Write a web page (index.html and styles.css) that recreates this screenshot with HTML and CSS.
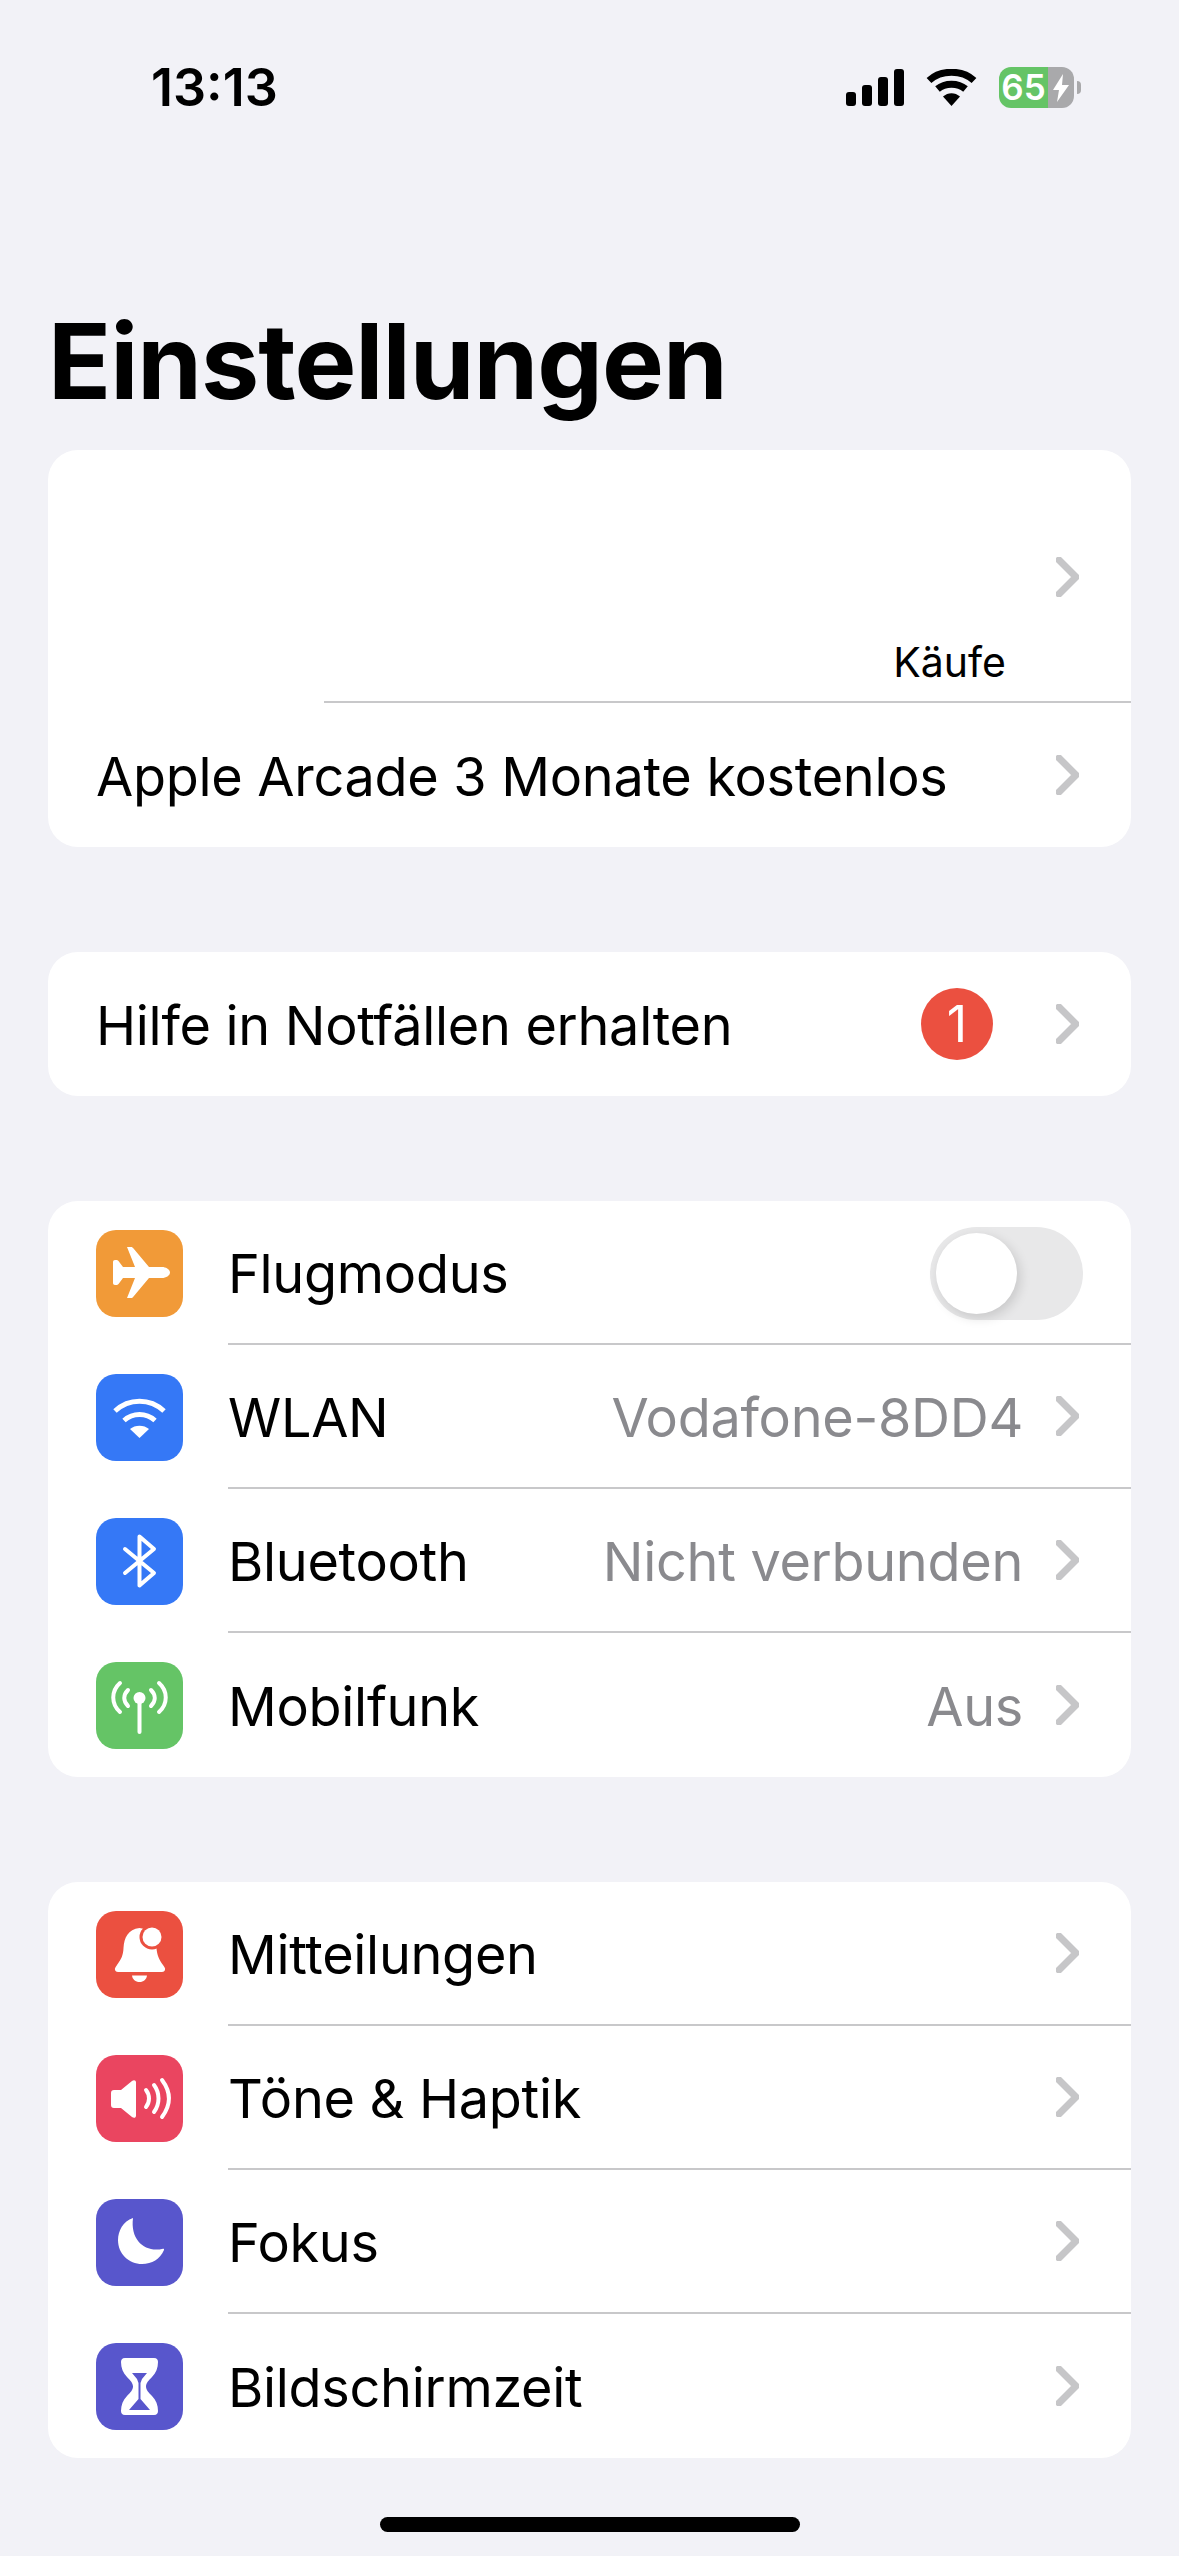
FILE: index.html
```html
<!DOCTYPE html>
<html lang="de">
<head>
    <meta charset="UTF-8">
    <meta name="viewport" content="width=device-width, initial-scale=1.0">
    <title>Einstellungen</title>
    <link rel="stylesheet" href="styles.css">
</head>
<body>

    <!-- Statusleiste -->
    <div class="status-bar">
        <span class="time">13:13</span>
        <div class="status-icons">
            <svg class="signal" width="58" height="37" viewBox="0 0 58 37">
                <rect x="0" y="23" width="10" height="14" rx="3"/>
                <rect x="16" y="16" width="10" height="21" rx="3"/>
                <rect x="32" y="8" width="10" height="29" rx="3"/>
                <rect x="48" y="0" width="10" height="37" rx="3"/>
            </svg>
            <svg class="wifi" width="51" height="37" viewBox="0 0 51 37">
                <path d="M3 11.500C15 .5 36 .5 48 11.500" fill="none" stroke="#000" stroke-width="7"/>
                <path d="M11.500 20C19 13.500 32 13.500 39.500 20" fill="none" stroke="#000" stroke-width="7"/>
                <path d="M17 27.500C22 23 29 23 34 27.500L25.500 37Z"/>
            </svg>
            <div class="battery">
                <div class="battery-level">65</div>
                <div class="battery-rest">
                    <svg width="18" height="28" viewBox="0 0 18 28">
                        <path d="M11 0 1 16h6L5 28 17 11h-7z" fill="#fff"/>
                    </svg>
                </div>
                <span class="battery-nub"></span>
            </div>
        </div>
    </div>

    <h1 class="title">Einstellungen</h1>

    <!-- Apple-ID -->
    <section class="card">
        <div class="account">
            <svg class="chevron account-chevron" width="23" height="40" viewBox="0 0 23 40"><path d="M3 3 20 20 3 37"/></svg>
            <span class="account-sub">Käufe</span>
        </div>
        <div class="row row-plain">
            <div class="row-body">
                <span class="label">Apple Arcade 3 Monate kostenlos</span>
                <svg class="chevron" width="23" height="40" viewBox="0 0 23 40"><path d="M3 3 20 20 3 37"/></svg>
            </div>
        </div>
    </section>

    <section class="card">
        <div class="row row-plain">
            <div class="row-body">
                <span class="label">Hilfe in Notfällen erhalten</span>
                <span class="badge">1</span>
                <svg class="chevron" width="23" height="40" viewBox="0 0 23 40"><path d="M3 3 20 20 3 37"/></svg>
            </div>
        </div>
    </section>

    <!-- Verbindungen -->
    <section class="card">
        <div class="row">
            <svg class="icon orange" viewBox="0 0 87 87">
                <path fill="#fff" d="M74 42.500c0-3-4-5.500-8-5.500H53L37.500 18.500c-.8-1-1.500-1.500-2.500-1.500h-4l8 20H27l-4.500-6c-.6-.7-1.200-1-2-1H19c-1.200 0-2 .8-2 2v21c0 1.200.8 2 2 2h1.500c.8 0 1.400-.3 2-1l4.500-6h12L31 68h4c1 0 1.700-.5 2.500-1.500L53 48h13c4 0 8-2.500 8-5.500z"/>
            </svg>
            <div class="row-body">
                <span class="label">Flugmodus</span>
                <div class="toggle"><span class="toggle-thumb"></span></div>
            </div>
        </div>
        <div class="row">
            <svg class="icon blue" viewBox="0 0 87 87">
                <path d="M19 37C33 24 54 24 68 37" fill="none" stroke="#fff" stroke-width="5"/>
                <path d="M28 46.500C37 38.500 50 38.500 59 46.500" fill="none" stroke="#fff" stroke-width="5"/>
                <path fill="#fff" d="M34 55C39 50.500 48 50.500 53 55L43.500 64Z"/>
            </svg>
            <div class="row-body">
                <span class="label">WLAN</span>
                <span class="value">Vodafone-8DD4</span>
                <svg class="chevron" width="23" height="40" viewBox="0 0 23 40"><path d="M3 3 20 20 3 37"/></svg>
            </div>
        </div>
        <div class="row">
            <svg class="icon blue" viewBox="0 0 87 87">
                <path d="M29 31 58 55 43.500 67.500V18.500L58 31 29 55" fill="none" stroke="#fff" stroke-width="4" stroke-linecap="round" stroke-linejoin="round"/>
            </svg>
            <div class="row-body">
                <span class="label">Bluetooth</span>
                <span class="value">Nicht verbunden</span>
                <svg class="chevron" width="23" height="40" viewBox="0 0 23 40"><path d="M3 3 20 20 3 37"/></svg>
            </div>
        </div>
        <div class="row">
            <svg class="icon green" viewBox="0 0 87 87">
                <circle cx="43.500" cy="36" r="6" fill="#fff"/>
                <g fill="none" stroke="#fff" stroke-width="4" stroke-linecap="round">
                    <path d="M43.500 38V70"/>
                    <path d="M24 21C15 29 15 42 24 50"/>
                    <path d="M63 21C72 29 72 42 63 50"/>
                    <path d="M32 28C27 33 27 39 32 44"/>
                    <path d="M55 28C60 33 60 39 55 44"/>
                </g>
            </svg>
            <div class="row-body">
                <span class="label">Mobilfunk</span>
                <span class="value">Aus</span>
                <svg class="chevron" width="23" height="40" viewBox="0 0 23 40"><path d="M3 3 20 20 3 37"/></svg>
            </div>
        </div>
    </section>

    <!-- Mitteilungen und Co. -->
    <section class="card">
        <div class="row">
            <svg class="icon red" viewBox="0 0 87 87">
                <path fill="#fff" d="M43.500 17C32 18 28 27 27.500 37c-.3 7-2 11-6.500 17-1.500 2-2.500 3.500-2 5 .4 1.300 1.500 2 3 2h44c1.500 0 2.600-.7 3-2 .5-1.500-.5-3-2-5-4-5.500-6-10-6.500-17C60 27 55 18 43.500 17z"/>
                <path fill="#fff" d="M36 64.500h15c-.5 4-3.500 6.500-7.500 6.500S36.500 68.500 36 64.500z"/>
                <circle cx="56" cy="26" r="12.500" fill="#eb5040"/>
                <circle cx="56" cy="26" r="9.500" fill="#fff"/>
            </svg>
            <div class="row-body">
                <span class="label">Mitteilungen</span>
                <svg class="chevron" width="23" height="40" viewBox="0 0 23 40"><path d="M3 3 20 20 3 37"/></svg>
            </div>
        </div>
        <div class="row">
            <svg class="icon pink" viewBox="0 0 87 87">
                <path fill="#fff" d="M15 38c0-2 1-3 3-3h7l11-9c2-1.500 4-.8 4 1.500v33c0 2.300-2 3-4 1.500l-11-9h-7c-2 0-3-1-3-3z"/>
                <g fill="none" stroke="#fff" stroke-width="4" stroke-linecap="round">
                    <path d="M50 35C54 40 54 47 50 52"/>
                    <path d="M58 30C64 38 64 49 58 57"/>
                    <path d="M66 25C75 37 75 50 66 62"/>
                </g>
            </svg>
            <div class="row-body">
                <span class="label">Töne &amp; Haptik</span>
                <svg class="chevron" width="23" height="40" viewBox="0 0 23 40"><path d="M3 3 20 20 3 37"/></svg>
            </div>
        </div>
        <div class="row">
            <svg class="icon indigo" viewBox="0 0 87 87">
                <path fill="#fff" d="M37 19C27 22 22 32 22 41c0 14 11 24 24 24 10 0 18-5 22-14 .3-1-.3-1.500-1-1.300C50 54 34 42 37 19z"/>
            </svg>
            <div class="row-body">
                <span class="label">Fokus</span>
                <svg class="chevron" width="23" height="40" viewBox="0 0 23 40"><path d="M3 3 20 20 3 37"/></svg>
            </div>
        </div>
        <div class="row">
            <svg class="icon indigo" viewBox="0 0 87 87">
                <path fill="#fff" d="M29 15H58c3 0 4 2 4 4 0 6-2 11-6 15-3 3-6 6-6 9.500s3 6.500 6 9.500c4 4 6 9 6 15 0 2-1 4-4 4H29c-3 0-4-2-4-4 0-6 2-11 6-15 3-3 6-6 6-9.500s-3-6.500-6-9.500c-4-4-6-9-6-15 0-2 1-4 4-4z"/>
                <path fill="#5856cc" d="M36 30H51L46 36 44.500 40V56L54 67H33L42.500 56V40L41 36Z"/>
            </svg>
            <div class="row-body">
                <span class="label">Bildschirmzeit</span>
                <svg class="chevron" width="23" height="40" viewBox="0 0 23 40"><path d="M3 3 20 20 3 37"/></svg>
            </div>
        </div>
    </section>

    <div class="home-indicator"></div>

</body>
</html>
```
FILE: styles.css
```css
/* Page */
body {
    margin: 0;
    height: 2556px;
    overflow: hidden;
    background-color: #f2f2f7;
    color: #000;
    font-family: Inter, "Liberation Sans", sans-serif;
}

/* Statusleiste */
.status-bar {
    display: flex;
    justify-content: space-between;
    align-items: center;
    height: 41px;
    padding: 67px 105px 0 151px;
}

.time {
    font-size: 52px;
    font-weight: 600;
}

.status-icons {
    display: flex;
    align-items: center;
    gap: 22px;
}

.battery {
    position: relative;
    display: flex;
    width: 75px;
    height: 41px;
    border-radius: 12px;
    overflow: visible;
}

.battery-level {
    width: 49px;
    background-color: #65c466;
    border-radius: 12px 0 0 12px;
    color: white;
    font-size: 35px;
    font-weight: 600;
    line-height: 41px;
    text-align: center;
}

.battery-rest {
    display: flex;
    align-items: center;
    justify-content: center;
    width: 26px;
    background-color: #a9a9ab;
    border-radius: 0 12px 12px 0;
}

.battery-nub {
    position: absolute;
    top: 14px;
    right: -7px;
    width: 4px;
    height: 13px;
    background-color: #a9a9ab;
    border-radius: 0 6px 6px 0;
}

/* Titel */
.title {
    margin: 191px 0 0 48px;
    font-size: 104px;
    font-weight: 700;
    line-height: 124px;
    letter-spacing: -1px;
}

/* Gruppen */
.card {
    margin: 27px 48px 0;
    background-color: white;
    border-radius: 30px;
    overflow: hidden;
}

.card + .card {
    margin-top: 105px;
}

.account {
    display: flex;
    flex-direction: column;
    align-items: flex-end;
    height: 251px;
    margin-left: 276px;
    border-bottom: 2px solid #c8c8ca;
}

.account-chevron {
    margin-top: 107px;
    margin-right: 52px;
}

.account-sub {
    margin-top: 41px;
    margin-right: 125px;
    font-size: 41px;
    line-height: 48px;
}

.row {
    display: flex;
    align-items: center;
    height: 144px;
    padding-left: 48px;
}

.row-plain {
    padding-left: 48px;
}

.row-body {
    display: flex;
    flex: 1;
    align-items: center;
    box-sizing: border-box;
    height: 100%;
    padding-right: 52px;
    border-bottom: 2px solid #c8c8ca;
}

.row:last-child .row-body {
    border-bottom: none;
}

.icon {
    flex-shrink: 0;
    width: 87px;
    height: 87px;
    margin-right: 45px;
    border-radius: 20px;
}

.orange { background-color: #f19a38; }
.blue { background-color: #3578f6; }
.green { background-color: #65c466; }
.red { background-color: #eb5040; }
.pink { background-color: #ea4560; }
.indigo { background-color: #5856cc; }

.label {
    flex: 1;
    padding-top: 2px;
    font-size: 54px;
    letter-spacing: -0.3px;
}

.value {
    margin-right: 33px;
    padding-top: 2px;
    color: #8a8a8e;
    font-size: 54px;
    letter-spacing: -0.3px;
}

.chevron {
    fill: none;
    stroke: #c6c6c8;
    stroke-width: 7;
    stroke-linecap: round;
    stroke-linejoin: round;
}

.badge {
    width: 72px;
    height: 72px;
    margin-right: 63px;
    background-color: #eb5040;
    border-radius: 50%;
    color: white;
    font-size: 50px;
    line-height: 72px;
    text-align: center;
}

/* Schalter */
.toggle {
    box-sizing: border-box;
    width: 153px;
    height: 93px;
    margin-top: 2px;
    margin-right: -4px;
    padding: 6px;
    background-color: #e8e8e9;
    border-radius: 47px;
}

.toggle-thumb {
    display: block;
    width: 81px;
    height: 81px;
    background-color: white;
    border-radius: 50%;
    box-shadow: 3px 4px 12px rgba(0, 0, 0, 0.14);
}

.home-indicator {
    width: 420px;
    height: 15px;
    margin: 59px auto 0;
    background-color: black;
    border-radius: 8px;
}
```
